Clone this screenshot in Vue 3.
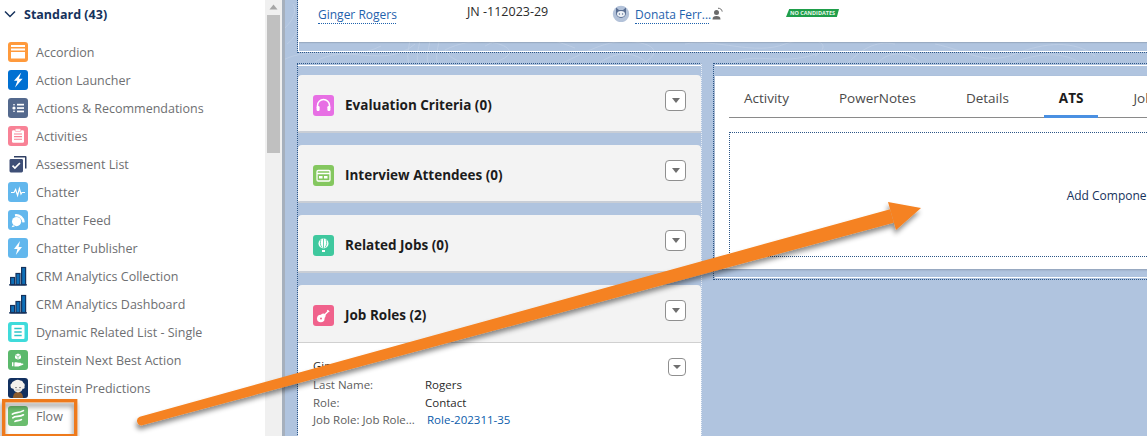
<script setup>
const items = [
  { name: 'Accordion', cls: 'ic-orange', svg: '<rect x="3" y="3" width="14" height="2" fill="#fff"/><rect x="3" y="6.5" width="14" height="2" fill="#fff"/><rect x="3" y="10" width="14" height="6.5" fill="#fff"/>' },
  { name: 'Action Launcher', cls: 'ic-blue', svg: '<path d="M13.200 2.600 6 10.800h3.400l-2.400 6.800 7.600-8.800h-3.700z" fill="#fff"/>' },
  { name: 'Actions & Recommendations', cls: 'ic-slate', svg: '<circle cx="6" cy="10" r="1.600" fill="#fff"/><rect x="5.300" y="6" width="1.400" height="1.400" fill="#fff"/><rect x="5.300" y="12.600" width="1.400" height="1.400" fill="#fff"/><rect x="9" y="5.800" width="7" height="1.700" fill="#fff"/><rect x="9" y="9.200" width="7" height="1.700" fill="#fff"/><rect x="9" y="12.600" width="7" height="1.700" fill="#fff"/>' },
  { name: 'Activities', cls: 'ic-pink', svg: '<rect x="4" y="4.200" width="12" height="12.600" rx="1.400" fill="#fff"/><rect x="7.200" y="2.800" width="5.600" height="2.600" rx=".6" fill="#fff" stroke="#f88296" stroke-width=".6"/><path d="M6 8h8M6 10.600h8M6 13.200h8" stroke="#f88296" stroke-width="1.100"/>' },
  { name: 'Assessment List', cls: 'ic-none', svg: '<path d="M6 3.500V2h11.500a1 1 0 0 1 1 1v11.500H17V3.500z" fill="#2f3f63"/><rect x="1.500" y="5" width="13.500" height="13.500" rx="1.400" fill="#3e4f77"/><path d="M4.500 11.600l2.400 2.400 5-5" stroke="#fff" stroke-width="1.700" fill="none"/>' },
  { name: 'Chatter', cls: 'ic-sky', svg: '<path d="M3 10.500h3l1.600-3 2 6 1.800-7 1.600 5.600 1-1.600h3" stroke="#fff" stroke-width="1.200" fill="none"/>' },
  { name: 'Chatter Feed', cls: 'ic-sky', svg: '<circle cx="8.600" cy="11.600" r="4.600" fill="#fff"/><path d="M7 5.400a7.400 7.400 0 0 1 8.600 7" stroke="#fff" stroke-width="2.400" fill="none"/><path d="M5 15l-1.400 2.200 3.200-.7z" fill="#fff"/>' },
  { name: 'Chatter Publisher', cls: 'ic-sky', svg: '<path d="M12 3 6 11h3.400l-1.600 6 6.200-8h-3.400z" fill="#fff"/>' },
  { name: 'CRM Analytics Collection', cls: 'ic-none', svg: '<path d="M1 19h18" stroke="#16325c" stroke-width="1.400"/><rect x="2.600" y="11.500" width="4" height="7" fill="#0d6fb8" stroke="#16325c" stroke-width="1.200"/><rect x="8" y="7.500" width="4" height="11" fill="#0d6fb8" stroke="#16325c" stroke-width="1.200"/><rect x="13.600" y="1.500" width="4" height="17" fill="#0d6fb8" stroke="#16325c" stroke-width="1.200"/>' },
  { name: 'CRM Analytics Dashboard', cls: 'ic-none', svg: '<path d="M1 19h18" stroke="#16325c" stroke-width="1.400"/><rect x="2.600" y="11.500" width="4" height="7" fill="#0d6fb8" stroke="#16325c" stroke-width="1.200"/><rect x="8" y="7.500" width="4" height="11" fill="#0d6fb8" stroke="#16325c" stroke-width="1.200"/><rect x="13.600" y="1.500" width="4" height="17" fill="#0d6fb8" stroke="#16325c" stroke-width="1.200"/>' },
  { name: 'Dynamic Related List - Single', cls: 'ic-teal', svg: '<rect x="3.500" y="3" width="13" height="14" rx="1" fill="#fff"/><path d="M6.300 6.500h7.400M6.300 10h7.400M6.300 13.500h7.400" stroke="#2cc5c9" stroke-width="1.600"/>' },
  { name: 'Einstein Next Best Action', cls: 'ic-green', svg: '<path d="M10 3.400l3 1.600v3.200l-3 1.600-3-1.600V5z" fill="#fff"/><path d="M7 5l3 1.600L13 5M10 6.600v3.200" stroke="#5bb96c" stroke-width=".6" fill="none"/><path d="M4 12.200h1.400v4H4zM6.400 12.600c2-1 3 0 4.600.2h1.600c1 0 1 1.300 0 1.300H10l4.400-.6c1-.2 1.500.7.600 1.200l-4.600 1.700H6.400z" fill="#fff"/>' },
  { name: 'Einstein Predictions', cls: 'ic-navy', svg: '<path d="M5 20c0-4 2-6 5-6s5 2 5 6z" fill="#8a5a2c"/><path d="M2.600 8c-.6-1.500.6-2.400 1.200-2.800C4.400 3.400 6 3.400 7 2.600c1.400-1 3.800-1.200 5.200 0 1.600-.2 2.800 1 3.200 2.400 1.300.6 1.800 2 1.100 3.400.6 1.200-.4 2.600-1.900 2.400-.4 2.200-2.600 3.600-4.600 3.600S5.800 13 5.400 10.800C4 11 2.200 9.600 2.600 8z" fill="#f4f1ec"/><circle cx="8" cy="9.600" r=".7" fill="#333"/><circle cx="12" cy="9.600" r=".7" fill="#333"/><path d="M7.500 12h5" stroke="#b9b2a8" stroke-width="1"/>' },
  { name: 'Flow', cls: 'ic-flow', svg: '<path d="M4.400 8.200C7.500 5.800 10.500 7.600 15.400 4.600M4.800 11.800c3-2.400 6.200-.2 10.600-3M7 15.400c2-1.400 4-.2 6.400-1.800" stroke="#fff" stroke-width="1.700" fill="none" stroke-linecap="round"/>' }
]

const cards = [
  { title: 'Evaluation Criteria (0)', cls: 'c-magenta', svg: '<path d="M4.500 12.500V10.500a6 6 0 0 1 12 0v2" stroke="#fff" stroke-width="1.500" fill="none"/><rect x="3.600" y="11" width="3" height="5" rx="1.200" fill="#fff"/><rect x="14.400" y="11" width="3" height="5" rx="1.200" fill="#fff"/>' },
  { title: 'Interview Attendees (0)', cls: 'c-lime', svg: '<rect x="4" y="5.500" width="13" height="10.500" rx="1.200" fill="none" stroke="#fff" stroke-width="1.300"/><path d="M4 8.500h13" stroke="#fff" stroke-width="1.300"/><rect x="6" y="11" width="3.500" height="2.500" fill="#fff"/><rect x="11" y="11" width="3.500" height="2.500" fill="#fff"/>' },
  { title: 'Related Jobs (0)', cls: 'c-mint', svg: '<circle cx="10.500" cy="8.500" r="5" fill="#fff"/><path d="M10.500 3.500v10M8 4.500c-1 2.500-1 5.500 1 8M13 4.500c1 2.500 1 5.500-1 8" stroke="#3fc89e" stroke-width=".8" fill="none"/><rect x="9" y="15" width="3" height="2" fill="#fff"/>' }
]
</script>

<template>
  <div class="page">
    <aside class="sidebar">
      <div class="group">
        <svg class="chev" width="14" height="9" viewBox="0 0 14 9"><path d="M2 1.500l5 5 5-5" stroke="#16325c" stroke-width="1.500" fill="none"/></svg>
        <span>Standard (43)</span>
      </div>
      <ul class="list">
        <li v-for="it in items" :key="it.name" class="item">
          <svg class="ic" :class="it.cls" viewBox="0 0 20 20" v-html="it.svg"></svg>
          <span>{{ it.name }}</span>
        </li>
      </ul>
    </aside>
    <div class="scrollbar">
      <svg width="9" height="6" viewBox="0 0 9 6" class="sb-arrow"><path d="M4.500 0.500 8.500 5.500H.5z" fill="#a6a6a6"/></svg>
      <div class="thumb"></div>
    </div>
    <div class="rule"></div>

    <main class="canvas">
      <svg class="texture" width="862" height="70" viewBox="0 0 862 70" fill="none" stroke="#c6d4e8" stroke-width="1">
        <path d="M0 28C8 20 12 12 8 4M2 44C10 38 14 30 12 20"/>
        <path d="M-2 60C30 44 60 64 96 46M30 62C60 42 100 70 130 44"/>
        <path d="M125 66C118 52 130 40 122 30M134 66C128 50 140 42 132 30M144 66C138 52 150 42 142 30M153 64C148 52 158 42 152 32"/>
        <path d="M160 50C190 34 230 44 224 54 216 66 170 70 160 50zM200 46C230 30 260 36 290 48"/>
        <path d="M270 66C300 54 320 38 350 42 380 46 370 60 350 66M310 66C330 50 350 50 366 66"/>
        <path d="M400 44C430 38 470 56 500 44 530 34 550 44 530 56M440 66C470 48 500 70 540 50"/>
        <path d="M560 66C575 50 590 40 610 44M590 66C600 52 620 48 640 66"/>
        <path d="M650 44C680 50 700 66 730 54 760 42 790 40 810 56M720 66C750 52 780 50 800 66"/>
      </svg>
      <section class="highlights">
        <div class="hl-inner">
          <div class="hl-card">
            <a class="lnk name">Ginger Rogers</a>
            <span class="jn">JN -112023-29</span>
            <svg class="avatar" width="18" height="18" viewBox="0 0 18 18">
              <circle cx="9" cy="10" r="8.200" fill="#b3c2d9"/>
              <path d="M4 3.500 7 6h4l3-2.500V9a5 5 0 0 1-10 0z" fill="#5a6f93"/>
              <ellipse cx="9" cy="10" rx="4" ry="3" fill="#eef2f7"/>
              <circle cx="7.400" cy="10" r=".7" fill="#5a6f93"/><circle cx="10.600" cy="10" r=".7" fill="#5a6f93"/>
            </svg>
            <a class="lnk owner">Donata Ferr...</a>
            <svg class="swap" width="11" height="13" viewBox="0 0 11 13">
              <circle cx="4.500" cy="5.500" r="2.500" fill="#6b6b6b"/>
              <path d="M.5 12.500c0-2.600 1.500-3.500 4-3.500s4 .9 4 3.500z" fill="#6b6b6b"/>
              <path d="M6 1.200c2.300 0 3.800 1.200 4.200 3.400" stroke="#6b6b6b" fill="none"/>
            </svg>
            <span class="badge">NO CANDIDATES</span>
          </div>
        </div>
      </section>

      <div class="cols">
        <section class="left region">
          <div class="strip"></div>
          <article v-for="c in cards" :key="c.title" class="card">
            <header class="card-h">
              <svg class="c-ic" :class="c.cls" viewBox="0 0 21 21" v-html="c.svg"></svg>
              <h3>{{ c.title }}</h3>
              <button class="tri-btn"><i class="tri"></i></button>
            </header>
          </article>
          <article class="card open">
            <header class="card-h">
              <svg class="c-ic c-rose" viewBox="0 0 21 21">
                <circle cx="7.800" cy="13.500" r="3.800" fill="#fff"/>
                <circle cx="10.300" cy="10.800" r="2.400" fill="#fff"/>
                <path d="M10.500 11l5-5" stroke="#fff" stroke-width="1.400"/>
                <path d="M14.600 4.800l2 1.400-.9 1.100-1.900-1.400z" fill="#fff"/>
                <circle cx="8" cy="13.400" r="1" fill="#f0628c"/>
              </svg>
              <h3>Job Roles (2)</h3>
              <button class="tri-btn"><i class="tri"></i></button>
            </header>
            <div class="record">
              <div class="rec-title">Ginger</div>
              <button class="tri-btn small"><i class="tri"></i></button>
              <dl class="fields">
                <dt>Last Name:</dt><dd>Rogers</dd>
                <dt>Role:</dt><dd>Contact</dd>
                <dt>Job Role: Job Role...</dt><dd class="rec-link">Role-202311-35</dd>
              </dl>
            </div>
          </article>
        </section>

        <section class="right region">
          <div class="right-inner">
            <div class="strip"></div>
            <div class="tabs-card">
              <nav class="tabs">
                <span class="tab">Activity</span>
                <span class="tab">PowerNotes</span>
                <span class="tab">Details</span>
                <span class="tab active">ATS</span>
                <span class="tab">Job</span>
              </nav>
              <div class="dropzone"><span>Add Component(s) Here</span></div>
            </div>
          </div>
        </section>
      </div>
    </main>

    <svg class="callout" width="1147" height="436" viewBox="0 0 1147 436">
      <defs>
        <filter id="sh" x="-5%" y="-20%" width="110%" height="140%">
          <feDropShadow dx="-1" dy="4" stdDeviation="2.500" flood-color="#000" flood-opacity=".45"/>
        </filter>
      </defs>
      <rect x="3.700" y="400.700" width="72" height="35" fill="none" stroke="#ee7a1a" stroke-width="3.400" filter="url(#sh)"/>
      <g filter="url(#sh)">
        <path d="M139.800 416.700 890.200 209.200 893.800 222.800 142.200 425.300A4.500 4.500 0 0 1 139.800 416.700z" fill="#f58220"/>
        <path d="M888 202 921 208 896 230z" fill="#f58220"/>
      </g>
    </svg>
  </div>
</template>

<style scoped>
.page {
  position: relative;
  display: flex;
  width: 1147px;
  height: 436px;
  overflow: hidden;
  background: #fff;
  font-family: "Open Sans", "Noto Sans", sans-serif;
  font-size: 12.5px;
}
.sidebar { width: 265px; flex: none; padding: 6px 0 0 3px; box-sizing: border-box; background: #fff; }
.group { display: flex; align-items: center; gap: 7px; height: 17px; font-weight: 700; font-size: 12.5px; color: #16325c; }
.chev { width: 14px; }
.list { list-style: none; margin: 15px 0 0; padding: 0 0 0 5px; }
.item { display: flex; align-items: center; gap: 8px; height: 28px; color: #6e6f72; white-space: nowrap; }
.ic { width: 20px; height: 20px; border-radius: 3px; flex: none; }
.ic-orange { background: #ff9a3c; }
.ic-blue { background: #0070d2; }
.ic-slate { background: #54698d; }
.ic-pink { background: #f88296; }
.ic-sky { background: #62b7ed; }
.ic-teal { background: #3fdbdb; }
.ic-green { background: #5bb96c; }
.ic-navy { background: #12305f; }
.ic-flow { background: #6bbd6e; }

.scrollbar { width: 17px; flex: none; background: #f0f0f0; display: flex; flex-direction: column; align-items: center; box-sizing: border-box; padding-top: 4px; }
.sb-arrow { flex: none; }
.thumb { width: 13px; height: 138px; margin-top: 5px; background: #c0c0c0; }
.rule { width: 3px; flex: none; background: #a6b0bd; }

.canvas { position: relative; flex: 1; min-width: 0; background: #b0c4df; padding-left: 12px; overflow: hidden; }
.texture { position: absolute; left: 0; top: 0; opacity: .55; }
.highlights { position: relative; height: 53px; margin-right: -20px; border-left: 1px dotted #2c5687; border-bottom: 1px dotted #2c5687; box-sizing: border-box; }
.hl-inner { height: 52px; border-left: 1px solid #fff; border-bottom: 1px solid #fff; box-sizing: border-box; }
.hl-card { height: 42px; background: #fff; display: flex; align-items: flex-start; box-shadow: 0 1px 1px rgba(0,0,0,.12); }
.lnk { color: #1f62ad; border-bottom: 1px dotted #1f62ad; line-height: 16px; white-space: nowrap; font-size: 12px; }
.name { margin: 7px 0 0 19px; width: 78px; }
.jn { margin: 3px 0 0 71px; width: 145px; color: #2b2b2b; line-height: 18px; white-space: nowrap; }
.avatar { margin-top: 4px; flex: none; }
.owner { margin: 7px 0 0 5px; width: 74px; }
.swap { margin: 7px 0 0 3px; flex: none; }
.badge { margin: 9px 0 0 63px; height: 8px; width: 53px; background: #1f9e4a; color: #e8f7ec; font-size: 5.500px; font-weight: 700; line-height: 8px; text-align: center; white-space: nowrap; clip-path: polygon(6% 0, 100% 0, 96% 100%, 0 100%); }

.cols { position: relative; display: flex; align-items: flex-start; gap: 11px; margin-top: 10px; }
.region { box-sizing: border-box; flex: none; border-top: 1px dotted #2c5687; border-left: 1px dotted #2c5687; padding-top: 1px; }
.strip { height: 10px; border-top: 1px solid #fff; box-sizing: border-box; }
.left { width: 405px; height: 400px; border-right: 1px dotted #e6ecf5; }
.card { background: #f3f3f3; border-radius: 4px 4px 0 0; margin-bottom: 12px; border-bottom: 2px solid #c9ced6; height: 58px; box-sizing: border-box; }
.card-h { display: flex; align-items: center; height: 56px; padding: 0 15px; position: relative; }
.card h3 { margin: 3px 0 0 11px; font-size: 13.500px; font-weight: 700; color: #1c1c1c; white-space: nowrap; }
.c-ic { width: 21px; height: 21px; border-radius: 3px; flex: none; margin-top: 4px; }
.c-magenta { background: #e76fe4; }
.c-lime { background: #84c75f; }
.c-mint { background: #3fc89e; }
.c-rose { background: #f0628c; }
.tri-btn { position: absolute; right: 15px; top: 15px; width: 21px; height: 21px; padding: 0; background: #fff; border: 1px solid #8f8f8f; border-radius: 4px; display: flex; align-items: center; justify-content: center; box-sizing: border-box; }
.tri { display: block; width: 0; height: 0; border-left: 4.500px solid transparent; border-right: 4.500px solid transparent; border-top: 5px solid #6f6f6f; }
.open { border-bottom: 0; height: auto; }
.open .card-h { border-bottom: 1px solid #d0d0d0; height: 58px; box-sizing: border-box; }
.record { position: relative; background: #fff; padding: 15px 15px 30px; height: 90px; font-size: 11.500px; }
.rec-title { color: #2b2b2b; line-height: 16px; height: 18px; }
.small { top: 15px; right: 15px; width: 18px; height: 18px; }
.small .tri { border-left-width: 4px; border-right-width: 4px; border-top-width: 4px; }
.fields { display: grid; grid-template-columns: 112px 1fr; margin: 0; line-height: 17.500px; }
.fields dt { color: #5d5d5d; white-space: nowrap; }
.fields dd { margin: 0; color: #2b2b2b; }
.fields .rec-link { color: #0b5cab; padding-left: 2px; }

.right { width: 840px; border-bottom: 1px dotted #2c5687; padding: 1px 0 1px 1px; }
.right-inner { border-bottom: 1px solid #fff; padding-bottom: 8px; }
.tabs-card { background: #fff; margin-top: 1px; height: 193px; padding: 0 14px; box-shadow: 0 1px 2px rgba(0,0,0,.2); box-sizing: border-box; }
.tabs { display: flex; gap: 20px; height: 42px; border-bottom: 1px solid #8a8a8a; box-sizing: border-box; }
.tab { padding: 0 15px; line-height: 44px; color: #4a4a4a; font-size: 13.500px; white-space: nowrap; box-sizing: border-box; height: 42px; }
.tab.active { font-weight: 700; color: #1c1c1c; border-bottom: 3px solid #4a90e2; }
.dropzone { margin-top: 14px; padding-top: 2px; height: 125px; border: 1px dotted #2c5687; display: flex; align-items: center; justify-content: center; color: #16325c; font-size: 12px; box-sizing: border-box; }

.callout { position: absolute; left: 0; top: 0; pointer-events: none; }
</style>
